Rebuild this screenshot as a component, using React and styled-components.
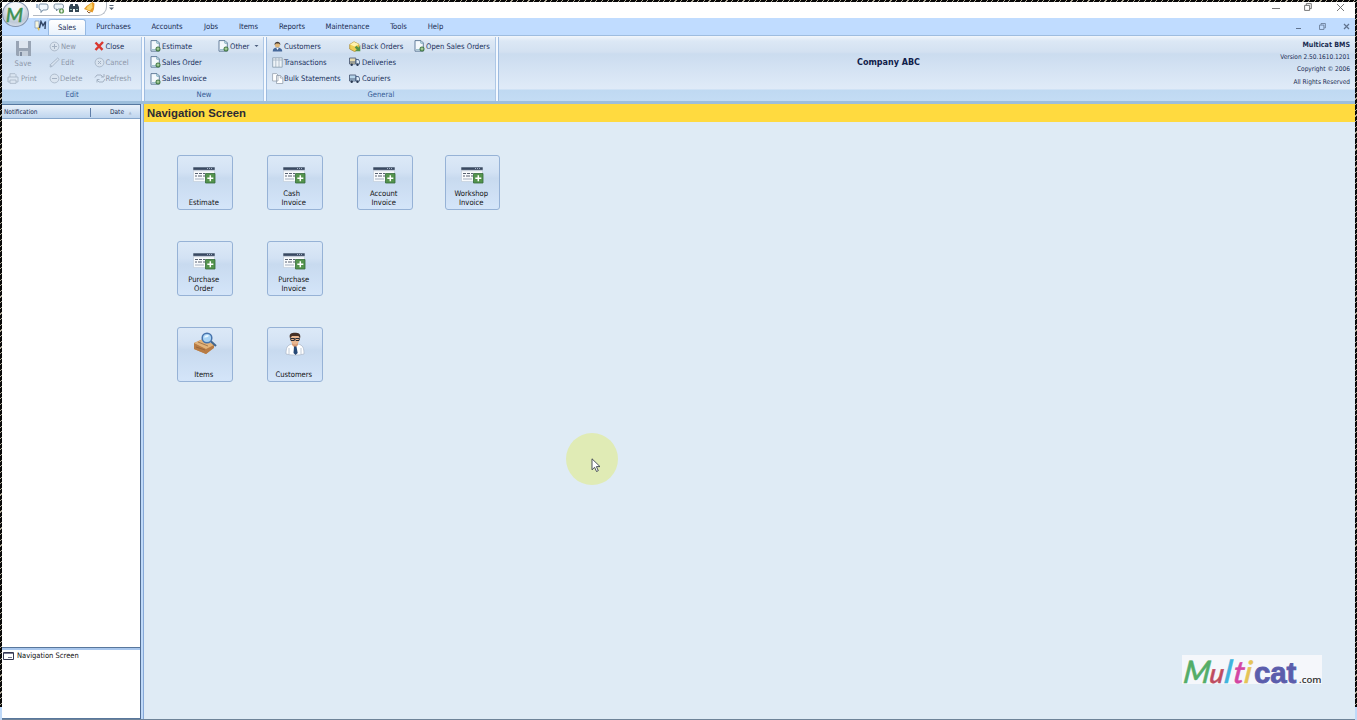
import React from "react";
import styled, { createGlobalStyle } from "styled-components";

const GlobalStyle = createGlobalStyle`
    * { box-sizing: border-box; }
    body {
        margin: 0;
        overflow: hidden;
        font-family: "DejaVu Sans Condensed", "DejaVu Sans", sans-serif;
        font-stretch: condensed;
        font-size: 7.6px;
        color: #1a2c52;
    }
    svg { display: block; flex: none; }
`;

const hatch = "repeating-linear-gradient(135deg, #080808 0 2px, #aaa594 2px 2.8px, #080808 2.8px 4px)";

const Window = styled.div`
    position: relative;
    width: 1357px;
    height: 720px;
    padding: 2px 2px 0;
    display: flex;
    flex-direction: column;
    overflow: hidden;
    background: #bfd9f8;
`;

const HatchTop = styled.div`
    position: absolute;
    top: 0;
    left: 0;
    right: 0;
    height: 2px;
    background: ${hatch};
`;

const HatchSide = styled.div`
    position: absolute;
    top: 0;
    ${p => p.$side}: 0;
    width: ${p => (p.$side === "left" ? 1.5 : 2)}px;
    height: 707px;
    background: ${hatch};
`;

const TitleBar = styled.header`
    height: 16px;
    flex: none;
    display: flex;
    justify-content: space-between;
    background: #fff;
`;

const QuickAccess = styled.div`
    display: flex;
    align-items: center;
    gap: 4px;
    width: 74px;
    height: 14px;
    margin-left: 31px;
    padding: 0 0 2px 3px;
    border: 1px solid #b3b9c3;
    border-top: 0;
    border-left: 0;
    border-radius: 0 0 9px 0;
`;

const TitleLeft = styled.div`
    display: flex;
    gap: 2px;
`;

const WindowButtons = styled.div`
    display: flex;
    gap: ${p => p.$gap}px;
    padding: ${p => p.$pad};
`;

const Orb = styled.div`
    position: absolute;
    top: 1px;
    left: 2px;
    width: 27px;
    height: 26px;
    border-radius: 50%;
    border: 1px solid #8292ab;
    background: radial-gradient(circle at 50% 25%, #f4f6f9 0 25%, #bec8d6 65%, #e9f1fa 100%);
    color: #3f9152;
    font: italic 500 20px/24px Lato, sans-serif;
    text-align: center;
    padding-right: 2px;
    -webkit-text-stroke: 0.4px #3f9152;
`;

const TabBar = styled.nav`
    height: 17px;
    flex: none;
    display: flex;
    background: #c0dcff;
    padding-left: 32px;
`;

const Tab = styled.div`
    width: ${p => p.$w}px;
    text-align: center;
    line-height: 18px;
    white-space: nowrap;
    ${p => p.$active && `
        background: linear-gradient(#fff, #e9f2fc);
        border: 1px solid #96b9e3;
        border-bottom: 0;
        border-radius: 3px 3px 0 0;
        line-height: 15px;
        margin-top: 1px;
    `}
`;

const BrandMark = styled.div`
    width: 14px;
    padding-top: 2px;
`;

const Spacer = styled.div`
    flex: 1;
`;

const Ribbon = styled.div`
    height: 69px;
    flex: none;
    display: flex;
    border-top: 1px solid #9fbddf;
    border-bottom: 3px solid #9dbedb;
    background: linear-gradient(#f2f6fb 0, #dce8f5 5px, #d3e1f1 16px, #cbdcef 18px, #e0ebf8 53px, #bfd9f2 54px, #c4dcf4 100%);
`;

const Group = styled.section`
    width: ${p => p.$w}px;
    display: flex;
    flex-direction: column;
    margin-top: 1px;
    border-right: 2px solid #f4f9ff;
    box-shadow: 1px 0 0 #9dbbe0, inset -1px 0 0 #adc7e6;
`;

const GroupBody = styled.div`
    height: 52px;
    display: flex;
    padding: 1px 0 0 ${p => p.$left}px;
`;

const GroupTitle = styled.div`
    flex: 1;
    text-align: center;
    line-height: 12px;
    color: #355c96;
`;

const Column = styled.div`
    width: ${p => p.$w}px;
    flex: none;
`;

const Command = styled.div`
    display: flex;
    align-items: center;
    gap: ${p => p.$gap ?? 1}px;
    height: 16.3px;
    white-space: nowrap;
    color: ${p => (p.$off ? "#8d97a8" : "#182f5b")};
    svg { opacity: ${p => (p.$off ? 0.6 : 1)}; }
`;

const SaveButton = styled.div`
    display: flex;
    flex-direction: column;
    align-items: center;
    height: 32.6px;
    width: 32px;
    padding-top: 2px;
    gap: 2px;
    color: #8d97a8;
`;

const Company = styled.div`
    width: 781px;
    padding-top: 21px;
    text-align: center;
    font-size: 8.95px;
    font-weight: bold;
    color: #10204a;
`;

const About = styled.div`
    flex: 1;
    padding: 3px 5px 0 0;
    text-align: right;
    font-size: 6.5px;
    line-height: 12.2px;
    white-space: nowrap;
    b { font-size: 7.1px; }
`;

const Body = styled.div`
    flex: 1;
    min-height: 0;
    display: flex;
    border-bottom: 1px solid #6e8398;
`;

const Sidebar = styled.aside`
    width: 139px;
    display: flex;
    flex-direction: column;
    gap: 2px;
    background: #a9c7ed;
    border-right: 1px solid #4f6c94;
`;

const Pane = styled.div`
    background: #fff;
    border-bottom: 1px solid #58779c;
    ${p => (p.$h ? `height: ${p.$h}px;` : "flex: 1;")}
`;

const ListHeader = styled.div`
    height: 15px;
    display: flex;
    align-items: center;
    padding-top: 1px;
    border-top: 1px solid #56789f;
    border-bottom: 1px solid #85a5ca;
    background: linear-gradient(#e9f1fa, #bfd5ee);
    font-size: 6.5px;
`;

const HeaderCell = styled.div`
    width: ${p => p.$w}px;
    padding-left: ${p => p.$left}px;
    line-height: 9px;
    white-space: nowrap;
    border-right: ${p => (p.$line ? "1px solid #5f7ea8" : "0")};
    i { color: #a7b8cc; font-size: 4px; margin-left: 3px; }
`;

const PaneItem = styled.div`
    display: flex;
    align-items: center;
    gap: 3px;
    height: 11px;
    padding-left: 1px;
    color: #111;
    white-space: nowrap;
    font-size: 7.5px;
`;

const Main = styled.main`
    flex: 1;
    margin-left: 2px;
    border-left: 1px solid #87a9d8;
    background: #dfebf5;
    display: flex;
    flex-direction: column;
`;

const ScreenTitle = styled.h1`
    height: 18px;
    margin: 0;
    padding-left: 3px;
    background: #ffda3f;
    color: #2c2b35;
    font: bold 11.35px/19px "Liberation Sans", Arial, sans-serif;
`;

const Launchers = styled.div`
    display: grid;
    grid-template-columns: 90px 90px 87.5px 56px;
    grid-auto-rows: 86px;
    padding: 33px 0 0 33px;
`;

const Launcher = styled.button`
    width: 55.5px;
    height: 55px;
    padding: ${p => (p.$tall ? 4 : 11)}px 0 2px;
    display: flex;
    flex-direction: column;
    align-items: center;
    justify-content: space-between;
    border: 1px solid #96b2d6;
    border-radius: 3px;
    background: linear-gradient(#dce9f7 0, #d3e2f4 30%, #c8daef 42%, #d4e5f9 100%);
    color: #111;
    font: inherit;
    line-height: 9px;
    white-space: pre-wrap;
`;

const LauncherText = styled.span`
    margin-left: -2px;
`;

const Logo = styled.div`
    display: flex;
    align-items: baseline;
    align-self: flex-end;
    width: 140px;
    height: 29px;
    margin: auto 33px 35px 0;
    padding-left: 2px;
    background: #f5f7fb;
    white-space: nowrap;
`;

const Script = styled.span`
    flex: none;
    width: ${p => p.$w}px;
    color: ${p => p.$c};
    font: italic 500 ${p => p.$size}px/31px Lato, sans-serif;
    transform: skewX(-7deg);
    -webkit-text-stroke: 0.5px ${p => p.$c};
`;

const LogoCat = styled.span`
    flex: none;
    width: 45px;
    color: #5b5dac;
    font: bold 29.5px/31px "Liberation Sans", sans-serif;
    letter-spacing: -0.2px;
    -webkit-text-stroke: 0.8px #5b5dac;
`;

const LogoCom = styled.span`
    color: #333;
    font: 600 9.6px/29px "Open Sans", sans-serif;
`;

const Pointer = styled.div`
    position: absolute;
    left: 566px;
    top: 432.5px;
    width: 52px;
    height: 52px;
    border-radius: 50%;
    background: #e0ebb5;
    padding: 25.5px 0 0 25px;
`;

const DocIcon = () => (
    <svg width="11" height="12" viewBox="0 0 11 12">
        <path d="M1 .6h6l2.300 2.300v8.300H1z" fill="#f4f9fd" stroke="#587392" strokeWidth=".9" />
        <path d="M6.800.8v2.400h2.400M2 9.800h4" fill="none" stroke="#79a9bb" />
        <circle cx="8" cy="8.900" r="2.500" fill="#467b49" />
        <path d="M8 7.400v3M6.500 8.900h3" stroke="#c7e8b5" strokeWidth=".9" />
    </svg>
);

const FloppyIcon = () => (
    <svg width="17" height="17" viewBox="0 0 17 17">
        <path d="M1 1h15v15H2l-1-1z" fill="#98a4b4" />
        <path d="M4 1h9v7H4z" fill="#dde5ef" />
        <path d="M4 11h9v5H4z" fill="#c3cdd9" />
        <path d="M5 12h2v4H5z" fill="#7f8c9f" />
    </svg>
);

const PrinterIcon = () => (
    <svg width="12" height="11" viewBox="0 0 12 11" fill="#dce5ef" stroke="#8794a5" strokeWidth=".8">
        <path d="M3 4V.7h5l1 1V4M1 4h10v5H1z" />
        <path d="M3 7h6v3.400H3z" />
    </svg>
);

const RoundIcon = ({ d }) => (
    <svg width="11" height="11" viewBox="0 0 11 11" fill="none" stroke="#8290a3">
        <circle cx="5.500" cy="5.500" r="4.400" fill="#dce4ed" strokeWidth=".8" />
        <path d={d} />
    </svg>
);

const PencilIcon = () => (
    <svg width="11" height="11" viewBox="0 0 11 11" fill="#dce5ef" stroke="#8290a3" strokeWidth=".8">
        <path d="M1 10l.5-2.500L8.700 1l1.400 1.400L3 9.500zM1 7.500l2 2" />
    </svg>
);

const CloseIcon = () => (
    <svg width="10" height="10" viewBox="0 0 10 10">
        <path d="M1.500 1.500l7 7.300M9 1L1.500 9" stroke="#d93830" strokeWidth="2.400" />
    </svg>
);

const RefreshIcon = () => (
    <svg width="12" height="11" viewBox="0 0 12 11" fill="none" stroke="#8290a3">
        <path d="M1 4.500L3 2h4l2 2M7 4h3V1M11 6L9 9H5L3 7M5.500 6.500H3v3" />
    </svg>
);

const PersonIcon = () => (
    <svg width="11" height="11" viewBox="0 0 11 11">
        <path d="M.7 10.500c0-3 1.800-4 4.500-4s5 1 5 4z" fill="#46699b" />
        <circle cx="5.400" cy="4" r="2.500" fill="#dfb77c" />
        <path d="M2.600 4C2 0 8.800-.5 8.300 4L7 2.500H4z" fill="#443b35" />
        <path d="M4.300 7l1.200 2 1.200-2z" fill="#fff" />
    </svg>
);

const GridIcon = () => (
    <svg width="11" height="11" viewBox="0 0 11 11" fill="#eef4f8" stroke="#879aac" strokeWidth=".8">
        <path d="M.7.8h9.500v9.400H.7z" />
        <path d="M3.800 1v9M7 1v9M1 3h9" opacity=".7" />
    </svg>
);

const PagesIcon = () => (
    <svg width="12" height="11" viewBox="0 0 12 11" fill="#fff" stroke="#8995a5" strokeWidth=".7">
        <path d="M.6.6h4L6 2v6H.6zM4.500 2.500h4l2.300 2.300v5.700H4.500z" />
        <path d="M8.300 2.700V5h2.300" />
    </svg>
);

const BoxIcon = () => (
    <svg width="12" height="11" viewBox="0 0 12 11">
        <path d="M.7 3.500L5 .8l5 2.500v5L5.500 10.500.7 8z" fill="#efcf54" stroke="#a9852f" strokeWidth=".7" />
        <path d="M1 3.500l4.500 2L10 3.300 5 1z" fill="#fff3b1" />
        <path d="M11.300 4v6.300H6l1.700-1.700-2-2 1.900-1.800 2 2z" fill="#55934a" />
    </svg>
);

const TruckIcon = ({ c }) => (
    <svg width="11" height="10" viewBox="0 0 11 10">
        <path d="M.5 1h6.300v6H.5z" fill={c} stroke="#41526e" strokeWidth=".8" />
        <path d="M7 2.500h2.500l1.100 2.200V7H7z" fill="#dce9f5" stroke="#354e76" strokeWidth=".8" />
        <path d="M.5 5h6.300" stroke="#50627f" />
        <circle cx="2.700" cy="7.800" r="1.200" fill="#293951" />
        <circle cx="8.500" cy="7.800" r="1.200" fill="#293951" />
    </svg>
);

const FormIcon = () => (
    <svg width="23" height="17" viewBox="0 0 23 17">
        <path d="M.5.5h21v14H.5z" fill="#f9fbfd" stroke="#bdc9d6" strokeWidth=".6" />
        <path d="M.3.300h21.400v2.600H.3z" fill="#394962" />
        <path d="M14 1.500h6" stroke="#a5b2c8" strokeDasharray="1 1" />
        <path d="M.5 3.700h21" stroke="#a9b6c6" strokeWidth=".8" />
        <path d="M2 6.500h3M6 6.500h3M10 6.500h2M2 9h2M5 9h4M10 9h2" stroke="#586170" />
        <path d="M2 12h9" stroke="#a4afbf" />
        <path d="M12.500 6.500H22V16h-9.500z" fill="#54944d" stroke="#33693b" strokeWidth=".8" />
        <path d="M17.300 8.200v6M14.300 11.200h6" stroke="#fff" strokeWidth="1.500" />
    </svg>
);

const ItemsIcon = () => (
    <svg width="24" height="24" viewBox="0 0 24 24">
        <path d="M1 11l9-4 11 6v2l-8 7L1 17z" fill="#c78d51" />
        <path d="M1 11l12 5 8-3v3l-8 6-12-5z" fill="#b87b44" />
        <path d="M1 11l9-4 11 6-8 4z" fill="#e2b37a" />
        <path d="M5 10l10 4M3 15l9 3" stroke="#8c5d37" strokeWidth=".7" />
        <path d="M17.500 9l5.500 5" stroke="#44678d" strokeWidth="2.200" />
        <circle cx="14" cy="6" r="4.800" fill="#a8d3f5" stroke="#4773ac" strokeWidth="1.500" />
        <path d="M11 5.500c1-3 4-3 5-2-1 2-3 2-5 2" fill="#e9f7ff" />
    </svg>
);

const ManIcon = () => (
    <svg width="20" height="24" viewBox="0 0 20 24">
        <path d="M1 22c0-6 1-9 6-10h6c5 1 6 4 6 10-5 1.500-13 1.500-18 0z" fill="#fff" stroke="#a9b5c6" strokeWidth=".7" />
        <path d="M7 10h6v3l-3 3-3-3z" fill="#d69a74" />
        <ellipse cx="10" cy="7" rx="4.500" ry="5.500" fill="#eab790" />
        <path d="M5 6.500C3.500 1 7 .7 11 .8c4 0 5 3 4 5.700L13.500 4H7z" fill="#453027" />
        <path d="M5.500 6.500h3.800v2H6zM10.700 6.500h3.800l-.5 2h-3.300M9 7h2" fill="none" stroke="#282c37" />
        <path d="M9 14.500h2.500l1.200 6.500-2.200 2-2-2z" fill="#264876" />
        <path d="M4 16v6M16 16v6" stroke="#c1ccda" />
    </svg>
);

const QuickIcons = () => (
    <>
        <svg width="13" height="12" viewBox="0 0 13 12">
            <path d="M4 2h6q2 0 2 2v2q0 2-2 2H7l-2 2.500V8Q3 8 3 6V4q0-2 1-2z" fill="#f3f9ff" stroke="#5e7893" strokeWidth=".8" />
            <path d="M1 6V2" stroke="#547ba6" />
        </svg>
        <svg width="12" height="12" viewBox="0 0 12 12">
            <path d="M2.500 2h6q2 0 2 2v1q0 2-2 2H5L3.500 9V7H2.500Q1 7 1 5V4q0-2 1.500-2z" fill="#edf3f7" stroke="#687d93" strokeWidth=".8" />
            <circle cx="8.500" cy="9" r="2.600" fill="#659b59" />
            <path d="M8.500 7.500v3M7 9h3" stroke="#fff" strokeWidth=".8" />
        </svg>
        <svg width="10" height="11" viewBox="0 0 10 11">
            <path d="M0 5l1.500-3h2.500v8H0zM6 2h2.500L10 5v5H6zM4 4h2v3H4z" fill="#334653" />
            <path d="M1 7.500h2M7 7.500h2" stroke="#9ec1b9" />
        </svg>
        <svg width="13" height="13" viewBox="0 0 13 13">
            <path d="M9.500 1L3.500 5 1 8l8.500 3.500L11 8l.5-5.500z" fill="#e69a26" />
            <path d="M9 2L4.500 5.500 3 8l4 1.500 2.500-3z" fill="#f9d56d" />
            <path d="M4 10l2 2 1.500-1" stroke="#8c592b" fill="none" />
        </svg>
    </>
);

const Restore = ({ w, c }) => (
    <svg width={w} height={w} viewBox="0 0 8 8" fill="none" stroke={c} strokeWidth=".9">
        <path d="M.6 2.400h5v5h-5zM2.300 2V.6h5v5H6" />
    </svg>
);

const tabs = [
    ["Sales", 38], ["Purchases", 55], ["Accounts", 52], ["Jobs", 36], ["Items", 39],
    ["Reports", 48], ["Maintenance", 63], ["Tools", 39], ["Help", 35],
];

const launchers = [
    ["Estimate"], ["Cash  \nInvoice"], ["Account\nInvoice"], ["Workshop\nInvoice"],
    ["Purchase\nOrder"], ["Purchase\nInvoice"], null, null,
    ["Items", ItemsIcon], ["Customers", ManIcon],
];

const letters = [
    ["M", "#54ad68", 26, 31],
    ["u", "#be4c60", 15, 27],
    ["l", "#40b4dd", 9, 32],
    ["t", "#d347a4", 11, 31],
    ["i", "#e5c456", 9, 31],
];

export default function App() {
    return (
        <Window>
            <GlobalStyle />
            <TitleBar>
                <TitleLeft>
                    <QuickAccess><QuickIcons /></QuickAccess>
                    <svg width="6" height="11" viewBox="0 0 6 11">
                        <path d="M.5 3.500h4" stroke="#536274" />
                        <path d="M0 5.500h5L2.500 8z" fill="#536274" />
                    </svg>
                </TitleLeft>
                <WindowButtons $gap={24} $pad="1px 10px 0 0">
                    <svg width="8" height="9" viewBox="0 0 8 9"><path d="M0 5.500h8" stroke="#777" /></svg>
                    <Restore w={8} c="#666" />
                    <svg width="9" height="9" viewBox="0 0 9 9"><path d="M1 1l7 7M8 1L1 8" stroke="#666" strokeWidth=".9" /></svg>
                </WindowButtons>
            </TitleBar>
            <TabBar>
                <BrandMark>
                    <svg width="13" height="12" viewBox="0 0 13 12">
                        <path d="M1 1h4v7H1z" fill="#f7f5de" stroke="#7992b6" strokeWidth=".7" />
                        <path d="M3 8l2 3 1-4" fill="#e8be42" />
                        <path d="M5.500 8L7 1.500l2 4 2.500-4-.5 7.500" fill="none" stroke="#304466" strokeWidth="1.400" />
                    </svg>
                </BrandMark>
                {tabs.map(([name, w], i) => <Tab key={name} $w={w} $active={i === 0}>{name}</Tab>)}
                <Spacer />
                <WindowButtons $gap={17} $pad="5px 5px 0 0">
                    <svg width="6" height="7" viewBox="0 0 6 7"><path d="M0 5.500h5" stroke="#60738e" /></svg>
                    <Restore w={7} c="#60738e" />
                    <svg width="7" height="7" viewBox="0 0 7 7"><path d="M1 1l5 5M6 1L1 6" stroke="#60738e" strokeWidth="1.200" /></svg>
                </WindowButtons>
            </TabBar>
            <Ribbon>
                <Group $w={142}>
                    <GroupBody $left={5}>
                        <Column $w={42}>
                            <SaveButton><FloppyIcon />Save</SaveButton>
                            <Command $off $gap={2}><PrinterIcon />Print</Command>
                        </Column>
                        <Column $w={44.5}>
                            <Command $off><RoundIcon d="M3 5.500h5M5.500 3v5" />New</Command>
                            <Command $off><PencilIcon />Edit</Command>
                            <Command $off $gap={0}><RoundIcon d="M3 5.500h5" />Delete</Command>
                        </Column>
                        <Column $w={44}>
                            <Command $gap={2}><CloseIcon />Close</Command>
                            <Command $off><RoundIcon d="M4 4l3 3M7 4L4 7" />Cancel</Command>
                            <Command $off $gap={0}><RefreshIcon />Refresh</Command>
                        </Column>
                    </GroupBody>
                    <GroupTitle>Edit</GroupTitle>
                </Group>
                <Group $w={122}>
                    <GroupBody $left={6}>
                        <Column $w={68}>
                            <Command><DocIcon />Estimate</Command>
                            <Command><DocIcon />Sales Order</Command>
                            <Command><DocIcon />Sales Invoice</Command>
                        </Column>
                        <Column $w={45}>
                            <Command>
                                <DocIcon />Other
                                <svg width="9" height="5" viewBox="0 0 9 5"><path d="M4.500 1h4l-2 2z" fill="#4c5e7d" /></svg>
                            </Command>
                        </Column>
                    </GroupBody>
                    <GroupTitle>New</GroupTitle>
                </Group>
                <Group $w={232}>
                    <GroupBody $left={6}>
                        <Column $w={77}>
                            <Command><PersonIcon />Customers</Command>
                            <Command><GridIcon />Transactions</Command>
                            <Command $gap={0}><PagesIcon />Bulk Statements</Command>
                        </Column>
                        <Column $w={65}>
                            <Command $gap={0.5}><BoxIcon />Back Orders</Command>
                            <Command $gap={2}><TruckIcon c="#e7dcae" />Deliveries</Command>
                            <Command $gap={2}><TruckIcon c="#b8d6eb" />Couriers</Command>
                        </Column>
                        <Column $w={78}>
                            <Command><DocIcon />Open Sales Orders</Command>
                        </Column>
                    </GroupBody>
                    <GroupTitle>General</GroupTitle>
                </Group>
                <Company>Company ABC</Company>
                <About>
                    <b>Multicat BMS</b><br />
                    Version 2.50.1610.1201<br />
                    Copyright © 2006<br />
                    All Rights Reserved
                </About>
            </Ribbon>
            <Body>
                <Sidebar>
                    <Pane>
                        <ListHeader>
                            <HeaderCell $w={89} $left={2} $line>Notification</HeaderCell>
                            <HeaderCell $w={48} $left={19}>Date <i>▲</i></HeaderCell>
                        </ListHeader>
                    </Pane>
                    <Pane $h={69}>
                        <PaneItem>
                            <svg width="11" height="8" viewBox="0 0 11 8">
                                <path d="M.5.5h10v7H.5z" fill="#fff" stroke="#343650" />
                                <path d="M1 1.500h9M5 5.500h4" stroke="#777991" />
                            </svg>
                            Navigation Screen
                        </PaneItem>
                    </Pane>
                </Sidebar>
                <Main>
                    <ScreenTitle>Navigation Screen</ScreenTitle>
                    <Launchers>
                        {launchers.map((item, i) => {
                            if (!item) return <span key={i} />;
                            const Icon = item[1] || FormIcon;
                            return (
                                <Launcher key={i} $tall={!!item[1]}>
                                    <Icon />
                                    <LauncherText>{item[0]}</LauncherText>
                                </Launcher>
                            );
                        })}
                    </Launchers>
                    <Logo>
                        {letters.map(([ch, c, w, size]) => <Script key={ch} $c={c} $w={w} $size={size}>{ch}</Script>)}
                        <LogoCat>cat</LogoCat>
                        <LogoCom>.com</LogoCom>
                    </Logo>
                </Main>
            </Body>
            <Orb>M</Orb>
            <Pointer>
                <svg width="10" height="15" viewBox="0 0 10 15">
                    <path d="M1 .8v11l2.600-2.500 1.900 4.200 1.800-.8-1.900-4.100H9z" fill="#fff" stroke="#39404c" strokeWidth=".9" />
                </svg>
            </Pointer>
            <HatchTop />
            <HatchSide $side="left" />
            <HatchSide $side="right" />
        </Window>
    );
}
